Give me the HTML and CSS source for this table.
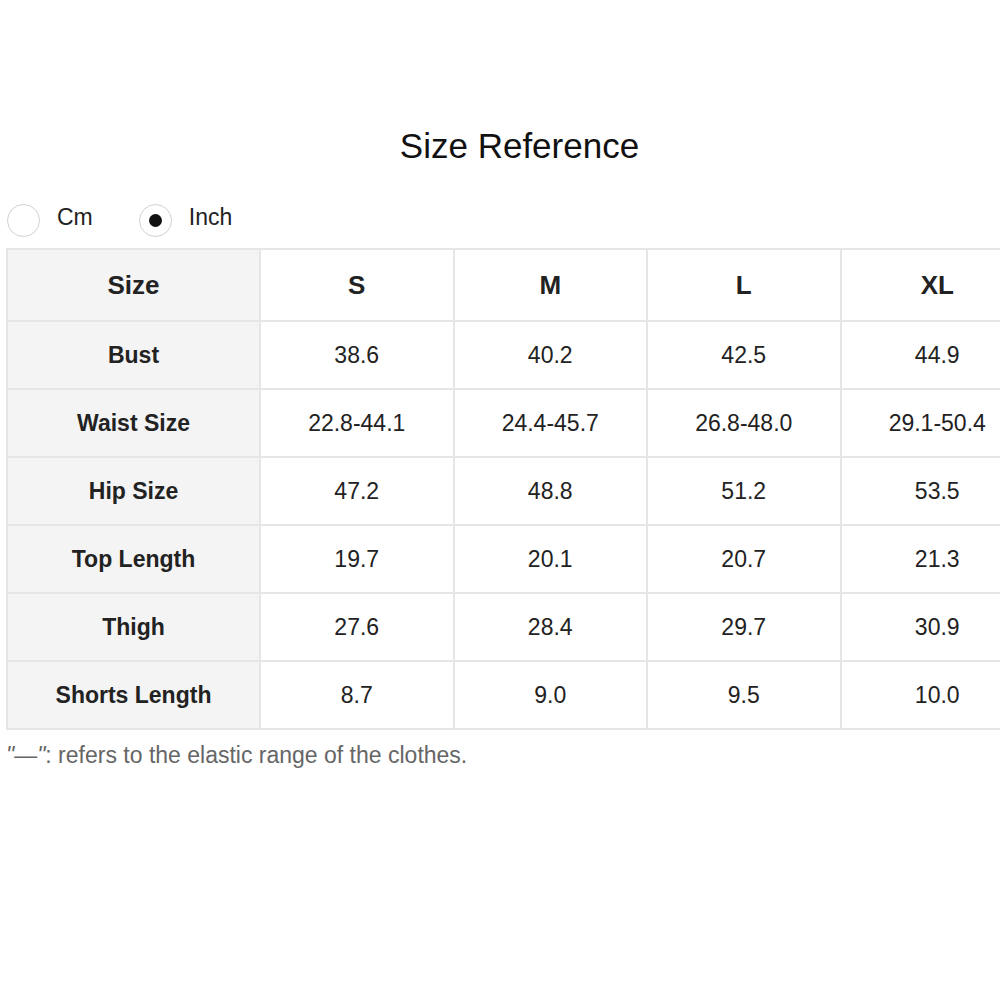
FILE: index.html
```html
<!DOCTYPE html>
<html>
<head>
<meta charset="utf-8">
<link rel="stylesheet" href="styles.css">
</head>
<body>
<div class="wrap">
  <h1 class="title">Size Reference</h1>
  <div class="units">
    <label class="unit"><span class="radio"></span><span class="unit-label">Cm</span></label>
    <label class="unit"><span class="radio checked"></span><span class="unit-label">Inch</span></label>
  </div>
  <table class="sizes">
    <colgroup>
      <col class="c-first"><col class="c"><col class="c"><col class="c"><col class="c">
    </colgroup>
    <thead>
      <tr><th class="rowhead">Size</th><th>S</th><th>M</th><th>L</th><th>XL</th></tr>
    </thead>
    <tbody>
      <tr><th class="rowhead">Bust</th><td>38.6</td><td>40.2</td><td>42.5</td><td>44.9</td></tr>
      <tr><th class="rowhead">Waist Size</th><td>22.8-44.1</td><td>24.4-45.7</td><td>26.8-48.0</td><td>29.1-50.4</td></tr>
      <tr><th class="rowhead">Hip Size</th><td>47.2</td><td>48.8</td><td>51.2</td><td>53.5</td></tr>
      <tr><th class="rowhead">Top Length</th><td>19.7</td><td>20.1</td><td>20.7</td><td>21.3</td></tr>
      <tr><th class="rowhead">Thigh</th><td>27.6</td><td>28.4</td><td>29.7</td><td>30.9</td></tr>
      <tr><th class="rowhead">Shorts Length</th><td>8.7</td><td>9.0</td><td>9.5</td><td>10.0</td></tr>
    </tbody>
  </table>
  <p class="note"><span class="q">"—"</span>: refers to the elastic range of the clothes.</p>
</div>
</body>
</html>
```
FILE: styles.css
```css
html { overflow: hidden; }
body {
  margin: 0;
  background: #fff;
  font-family: "Liberation Sans", Arial, sans-serif;
  color: #222;
}
.wrap {
  width: 1027px;
  padding-left: 6px;
  padding-top: 126px;
}
.title {
  margin: 0;
  text-align: center;
  font-size: 35px;
  font-weight: normal;
  line-height: 40px;
  color: #111;
}
.units {
  display: flex;
  align-items: center;
  gap: 46px;
  margin-top: 37px;
  height: 34px;
  padding-left: 1px;
}
.unit {
  display: flex;
  align-items: center;
  gap: 17px;
}
.radio {
  box-sizing: border-box;
  width: 33px;
  height: 33px;
  border: 1.5px solid #d0d0d0;
  border-radius: 50%;
  display: flex;
  align-items: center;
  justify-content: center;
}
.radio.checked::after {
  content: "";
  width: 13px;
  height: 13px;
  border-radius: 50%;
  background: #111;
}
.unit-label {
  font-size: 23px;
  color: #222;
  position: relative;
  top: -3px;
}
.sizes {
  margin-top: 11px;
  border-collapse: collapse;
  table-layout: fixed;
  width: 1027px;
}
.c-first { width: 253px; }
.c { width: 193.5px; }
.sizes th, .sizes td {
  border: 2px solid #e6e6e6;
  text-align: center;
  font-size: 23px;
  height: 66px;
  padding: 0;
}
.sizes thead th {
  height: 70px;
  font-size: 26px;
  font-weight: bold;
  color: #222;
}
.sizes td { color: #222; }
.sizes .rowhead {
  background: #f4f4f4;
  font-weight: bold;
  color: #222;
}
.note {
  margin: 12px 0 0;
  font-size: 23px;
  color: #666;
}
.q { font-style: italic; }
```
